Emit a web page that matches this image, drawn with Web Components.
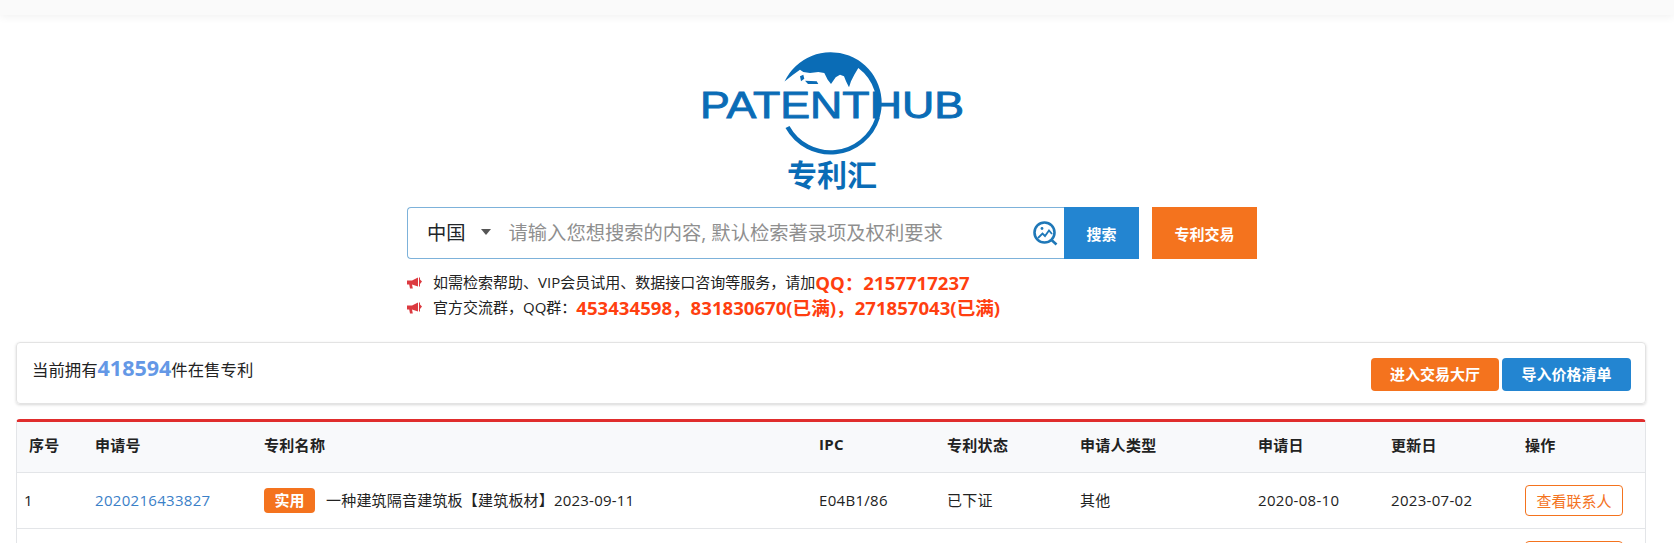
<!DOCTYPE html>
<html lang="zh">
<head>
<meta charset="utf-8">
<title>专利汇</title>
<style>
    html, body { margin: 0; padding: 0; background: #fff; overflow: hidden; height: 543px; }
    body { font-family: "Open Sans", "Noto Sans CJK SC", sans-serif; font-size: 15px; color: #212529; }
    pt-row > span { display: block; letter-spacing: 0.3px; margin-bottom: 2px; }
    pt-row > a { color: #3a80c8; letter-spacing: 0.3px; text-decoration: none; margin-bottom: 2px; }
</style>
</head>
<body>
<pt-topbar></pt-topbar>
<pt-logo></pt-logo>
<pt-search></pt-search>
<pt-notices>
    <pt-notice>如需检索帮助、VIP会员试用、数据接口咨询等服务，请加<b slot="hot">QQ：2157717237</b></pt-notice>
    <pt-notice>官方交流群，QQ群：<b slot="hot">453434598，831830670(已满)，271857043(已满)</b></pt-notice>
</pt-notices>
<pt-summary count="418594"></pt-summary>
<pt-table>
    <pt-row head>
        <span>序号</span><span>申请号</span><span>专利名称</span><span>IPC</span><span>专利状态</span><span>申请人类型</span><span>申请日</span><span>更新日</span><span>操作</span>
    </pt-row>
    <pt-row>
        <span style="margin-left:-5px">1</span>
        <a href="#">2020216433827</a>
        <pt-title kind="实用">一种建筑隔音建筑板【建筑板材】2023-09-11</pt-title>
        <span>E04B1/86</span>
        <span>已下证</span>
        <span>其他</span>
        <span>2020-08-10</span>
        <span>2023-07-02</span>
        <pt-contact></pt-contact>
    </pt-row>
    <pt-row>
        <span></span><span></span><span></span><span></span><span></span><span></span><span></span><span></span>
        <pt-contact></pt-contact>
    </pt-row>
</pt-table>

<script>
class PtTopbar extends HTMLElement {
    constructor() {
        super();
        this.attachShadow({ mode: 'open' });
    }

    connectedCallback() {
        this.shadowRoot.innerHTML = `
            <style>
                :host {
                    display: block;
                    height: 15px;
                    background: #fafafa;
                    box-shadow: 0 2px 8px rgba(0, 0, 0, 0.06);
                }
            </style>
        `;
    }
}

class PtLogo extends HTMLElement {
    constructor() {
        super();
        this.attachShadow({ mode: 'open' });
    }

    connectedCallback() {
        this.shadowRoot.innerHTML = `
            <style>
                :host {
                    display: flex;
                    justify-content: center;
                    padding: 15px 14px 7px 0;
                }
                svg { display: block; }
                text { fill: #0a6cb6; }
            </style>
            <svg width="340" height="170" viewBox="0 0 340 170">
                <path fill="#0a6cb6" d="M124.5,51.6 A51,51 0 0 1 219.5,88 L215,88 A46.5,46.5 0 0 0 198.3,38
                    L194.3,44.7 L191,51.3 L189,57.3 L186,51.3 L184,46.3 L180,44.7 L175.7,47.3 L171,54
                    L167.7,49.7 L164.3,43 L158.3,42 L150,43 L143.3,42 L140,39.7 L133,44.7 Z"/>
                <path fill="#0a6cb6" d="M140,46.3 L143.3,44.7 L144.3,48.7 L141,51.3 Z M145,50.7 L156.7,51.3 L158.3,54 L148,54 Z"/>
                <path fill="#0a6cb6" d="M125.5,98 A51.5,51.5 0 0 0 219.8,88 L215.3,88 A47,47 0 0 1 129.5,96 Z"/>
                <text x="40" y="87.6" font-family="Liberation Sans" font-size="37.5"
                    stroke="#0a6cb6" stroke-width="0.9"
                    textLength="264" lengthAdjust="spacingAndGlyphs">PATENTHUB</text>
                <text x="127" y="155.5" font-family="Noto Sans CJK SC" font-weight="bold" font-size="30">专利汇</text>
            </svg>
        `;
    }
}

class PtSearch extends HTMLElement {
    constructor() {
        super();
        this.attachShadow({ mode: 'open' });
    }

    connectedCallback() {
        this.shadowRoot.innerHTML = `
            <style>
                :host {
                    display: flex;
                    justify-content: center;
                    padding-right: 10px;
                }
                .box {
                    display: flex;
                    align-items: center;
                    box-sizing: border-box;
                    width: 657px;
                    height: 52px;
                    border: 1px solid #7db2da;
                    border-right: 0;
                    border-radius: 4px 0 0 4px;
                    font-size: 19.3px;
                    line-height: 1;
                }
                .country { margin-left: 19px; color: #212529; }
                .arrow {
                    width: 0;
                    height: 0;
                    margin: 0 18px 3px 15px;
                    border: 5px solid transparent;
                    border-top: 6px solid #555;
                    border-bottom: 0;
                }
                .hint { flex: 1; color: #8f8f8f; white-space: nowrap; }
                .box svg { margin-right: 6px; }
                .btn {
                    display: flex;
                    align-items: center;
                    justify-content: center;
                    height: 52px;
                    color: #fff;
                    font-weight: bold;
                    font-size: 15px;
                }
                .go { width: 75px; background: #2385d1; }
                .trade { width: 105px; margin-left: 13px; background: #f4731e; }
            </style>
            <div class="box">
                <span class="country">中国</span>
                <span class="arrow"></span>
                <span class="hint">请输入您想搜索的内容, 默认检索著录项及权利要求</span>
                <svg width="25" height="25" viewBox="0 0 25 25" fill="none" stroke="#1f78b8">
                    <circle cx="11.5" cy="11.5" r="10" stroke-width="2.6"/>
                    <path d="M18.5,19 L23.5,23.5" stroke-width="2.6"/>
                    <path d="M5,17 L9.5,12.5 L12,15 L16,9.5 L19,13" stroke-width="1.8"/>
                    <circle cx="9" cy="7.5" r="1.4" fill="#1f78b8" stroke="none"/>
                </svg>
            </div>
            <div class="btn go">搜索</div>
            <div class="btn trade">专利交易</div>
        `;
    }
}

class PtNotices extends HTMLElement {
    constructor() {
        super();
        this.attachShadow({ mode: 'open' });
    }

    connectedCallback() {
        this.shadowRoot.innerHTML = `
            <style>
                :host {
                    display: block;
                    padding: 10px 0 0 407px;
                }
            </style>
            <slot></slot>
        `;
    }
}

class PtNotice extends HTMLElement {
    constructor() {
        super();
        this.attachShadow({ mode: 'open' });
    }

    connectedCallback() {
        this.shadowRoot.innerHTML = `
            <style>
                :host {
                    display: flex;
                    align-items: center;
                    height: 25px;
                    white-space: nowrap;
                    font-size: 15px;
                    color: #222;
                }
                svg { margin: 2px 11px 0 0; flex: none; }
                ::slotted(b) {
                    font-size: 18.6px;
                    font-weight: bold;
                    color: #ff3f10;
                }
            </style>
            <svg width="15" height="12" viewBox="0 0 15 12" fill="#dc3a40">
                <path d="M0,3.5 H5 L11,0.5 V9.5 L5,7.5 L5.8,11.5 H3 L2.2,7.5 H0 Z"/>
                <path d="M12,0.5 H13 V2.5 L15,4.5 L13,7 V9.5 H12 Z"/>
            </svg>
            <slot></slot><slot name="hot"></slot>
        `;
    }
}

class PtSummary extends HTMLElement {
    constructor() {
        super();
        this.attachShadow({ mode: 'open' });
    }

    connectedCallback() {
        const count = this.getAttribute('count');

        this.shadowRoot.innerHTML = `
            <style>
                :host {
                    display: flex;
                    justify-content: space-between;
                    box-sizing: border-box;
                    height: 62px;
                    margin: 23px 28px 0 16px;
                    padding: 15px 14px 0 15px;
                    border: 1px solid #e3e3e3;
                    border-radius: 4px;
                    box-shadow: 0 1px 3px rgba(0, 0, 0, 0.16);
                }
                .text { margin-top: -2px; line-height: 24px; font-size: 16.4px; color: #222; }
                .num {
                    font-size: 21.5px;
                    font-weight: bold;
                    color: #6498e6;
                }
                .btns { display: flex; gap: 3px; }
                .btn {
                    display: flex;
                    align-items: center;
                    justify-content: center;
                    height: 33px;
                    padding-bottom: 2px;
                    box-sizing: border-box;
                    border-radius: 4px;
                    color: #fff;
                    font-weight: bold;
                    font-size: 15px;
                }
                .orange { width: 128px; background: #f4731e; }
                .blue { width: 129px; background: #2385d1; }
            </style>
            <div class="text">当前拥有<span class="num">${count}</span>件在售专利</div>
            <div class="btns">
                <div class="btn orange">进入交易大厅</div>
                <div class="btn blue">导入价格清单</div>
            </div>
        `;
    }
}

class PtTable extends HTMLElement {
    constructor() {
        super();
        this.attachShadow({ mode: 'open' });
    }

    connectedCallback() {
        this.shadowRoot.innerHTML = `
            <style>
                :host {
                    display: block;
                    margin: 15px 28px 0 16px;
                    border: 1px solid #e3e5e8;
                    border-top: 3px solid #e02d2d;
                    border-radius: 4px 4px 0 0;
                }
            </style>
            <slot></slot>
        `;
    }
}

class PtRow extends HTMLElement {
    constructor() {
        super();
        this.attachShadow({ mode: 'open' });
    }

    connectedCallback() {
        this.shadowRoot.innerHTML = `
            <style>
                :host {
                    display: grid;
                    grid-template-columns: 78px 169px 555px 128px 133px 178px 133px 134px 1fr;
                    align-items: center;
                    box-sizing: border-box;
                    height: 56px;
                    padding-left: 12px;
                    border-bottom: 1px solid #e3e5e8;
                    color: #222;
                }
                :host([head]) {
                    height: 51px;
                    padding-bottom: 4px;
                    background: #f8f9fb;
                    font-weight: bold;
                }
                ::slotted(:nth-child(n+2)) { margin-left: -12px; }
            </style>
            <slot></slot>
        `;
    }
}

class PtTitle extends HTMLElement {
    constructor() {
        super();
        this.attachShadow({ mode: 'open' });
    }

    connectedCallback() {
        const kind = this.getAttribute('kind');

        this.shadowRoot.innerHTML = `
            <style>
                :host {
                    display: flex;
                    align-items: center;
                    white-space: nowrap;
                    letter-spacing: 0.2px;
                }
                .kind {
                    width: 51px;
                    height: 25px;
                    margin-right: 11px;
                    border-radius: 4px;
                    background: #f4731e;
                    color: #fff;
                    font-weight: bold;
                    font-size: 15px;
                    line-height: 24px;
                    text-align: center;
                    letter-spacing: 0;
                }
                .name { margin-bottom: 2px; }
            </style>
            <span class="kind">${kind}</span>
            <span class="name"><slot></slot></span>
        `;
    }
}

class PtContact extends HTMLElement {
    constructor() {
        super();
        this.attachShadow({ mode: 'open' });
    }

    connectedCallback() {
        this.shadowRoot.innerHTML = `
            <style>
                :host {
                    display: flex;
                    align-items: center;
                    justify-content: center;
                    box-sizing: border-box;
                    width: 98px;
                    height: 31px;
                    border: 1px solid #f4731e;
                    border-radius: 4px;
                    color: #f4731e;
                    font-size: 15px;
                }
            </style>
            查看联系人
        `;
    }
}

customElements.define('pt-topbar', PtTopbar);
customElements.define('pt-logo', PtLogo);
customElements.define('pt-search', PtSearch);
customElements.define('pt-notices', PtNotices);
customElements.define('pt-notice', PtNotice);
customElements.define('pt-summary', PtSummary);
customElements.define('pt-table', PtTable);
customElements.define('pt-row', PtRow);
customElements.define('pt-title', PtTitle);
customElements.define('pt-contact', PtContact);
</script>
</body>
</html>
